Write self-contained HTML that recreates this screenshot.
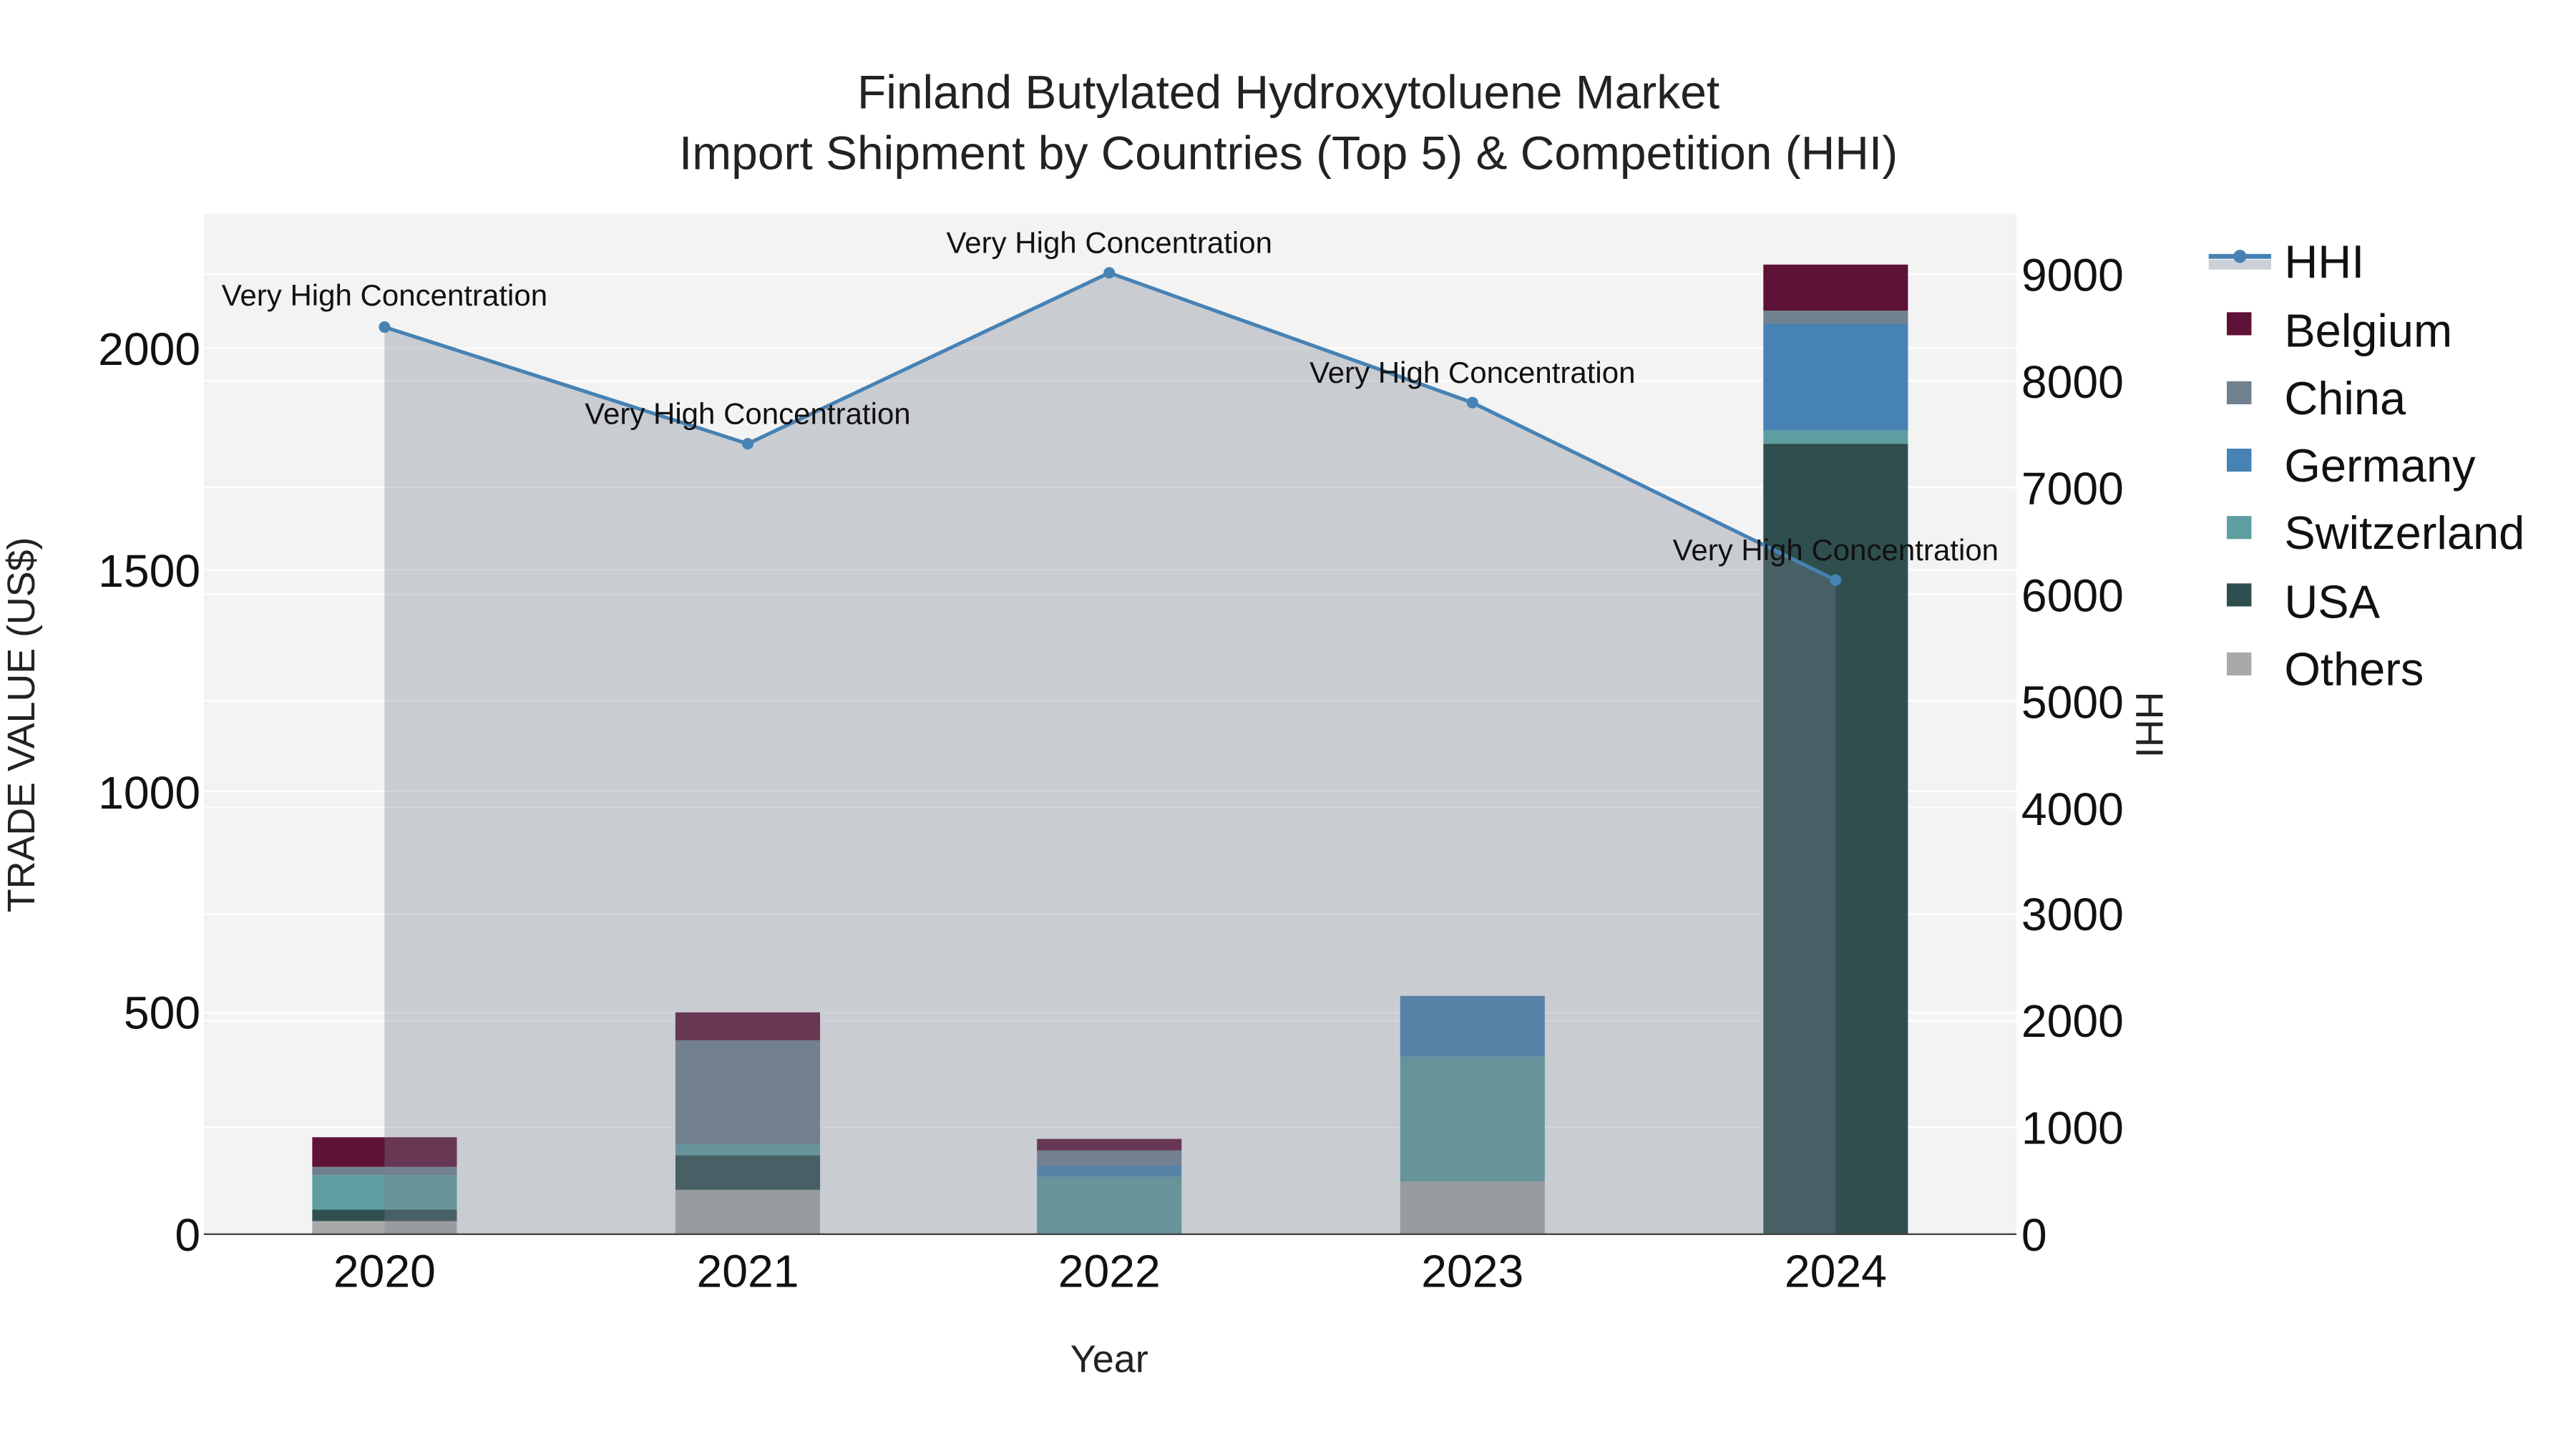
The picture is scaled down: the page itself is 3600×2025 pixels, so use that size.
<!DOCTYPE html>
<html><head><meta charset="utf-8"><style>html,body{margin:0;padding:0;background:#fff}svg{display:block}</style></head>
<body>
<svg width="3600" height="2025" viewBox="0 0 1567.5 881.7" preserveAspectRatio="none" xmlns="http://www.w3.org/2000/svg" font-family="Liberation Sans, sans-serif">
<rect width="1567.5" height="881.7" fill="#fff"/>
<rect x="124" y="130" width="1103" height="621" fill="#f3f3f3"/>
<g stroke="#fff" stroke-width="1">
<line x1="124" x2="1227" y1="616.25" y2="616.25"/>
<line x1="124" x2="1227" y1="481.5" y2="481.5"/>
<line x1="124" x2="1227" y1="346.75" y2="346.75"/>
<line x1="124" x2="1227" y1="212" y2="212"/>
<line x1="124" x2="1227" y1="686.1" y2="686.1"/>
<line x1="124" x2="1227" y1="621.2" y2="621.2"/>
<line x1="124" x2="1227" y1="556.3" y2="556.3"/>
<line x1="124" x2="1227" y1="491.4" y2="491.4"/>
<line x1="124" x2="1227" y1="426.5" y2="426.5"/>
<line x1="124" x2="1227" y1="361.6" y2="361.6"/>
<line x1="124" x2="1227" y1="296.7" y2="296.7"/>
<line x1="124" x2="1227" y1="231.8" y2="231.8"/>
<line x1="124" x2="1227" y1="166.9" y2="166.9"/>
</g>
<g>
<rect x="190" y="743" width="88" height="8" fill="#a9a9a9"/>
<rect x="190" y="736" width="88" height="7" fill="#2f4f4f"/>
<rect x="190" y="715" width="88" height="21" fill="#5f9ea0"/>
<rect x="190" y="710" width="88" height="5" fill="#708090"/>
<rect x="190" y="692" width="88" height="18" fill="#5e1235"/>

<rect x="411" y="724" width="88" height="27" fill="#a9a9a9"/>
<rect x="411" y="703" width="88" height="21" fill="#2f4f4f"/>
<rect x="411" y="696" width="88" height="7" fill="#5f9ea0"/>
<rect x="411" y="633" width="88" height="63" fill="#708090"/>
<rect x="411" y="616" width="88" height="17" fill="#5e1235"/>

<rect x="631" y="716" width="88" height="35" fill="#5f9ea0"/>
<rect x="631" y="709" width="88" height="7" fill="#4682b4"/>
<rect x="631" y="700" width="88" height="9" fill="#708090"/>
<rect x="631" y="693" width="88" height="7" fill="#5e1235"/>

<rect x="852" y="719" width="88" height="32" fill="#a9a9a9"/>
<rect x="852" y="643" width="88" height="76" fill="#5f9ea0"/>
<rect x="852" y="606" width="88" height="37" fill="#4682b4"/>

<rect x="1073" y="270" width="88" height="481" fill="#2f4f4f"/>
<rect x="1073" y="262" width="88" height="8" fill="#5f9ea0"/>
<rect x="1073" y="197" width="88" height="65" fill="#4682b4"/>
<rect x="1073" y="189" width="88" height="8" fill="#708090"/>
<rect x="1073" y="161" width="88" height="28" fill="#5e1235"/>
</g>
<path d="M234,199 L455,270 L675,166 L896,245 L1117,353 L1117,751 L234,751 Z" fill="#78828f" fill-opacity="0.34"/>
<line x1="124" x2="1227" y1="751" y2="751" stroke="#444" stroke-width="1"/>
<polyline points="234,199 455,270 675,166 896,245 1117,353" fill="none" stroke="#4682b4" stroke-width="2.2"/>
<g fill="#4682b4"><circle cx="234" cy="199" r="3.5"/><circle cx="455" cy="270" r="3.5"/><circle cx="675" cy="166" r="3.5"/><circle cx="896" cy="245" r="3.5"/><circle cx="1117" cy="353" r="3.5"/></g>
<g font-size="18.3" fill="#111" text-anchor="middle">
<text x="234" y="186">Very High Concentration</text>
<text x="455" y="258">Very High Concentration</text>
<text x="675" y="154">Very High Concentration</text>
<text x="896" y="233">Very High Concentration</text>
<text x="1117" y="341">Very High Concentration</text>
</g>
<g fill="#222" text-anchor="middle" font-size="28.7">
<text x="784" y="66">Finland Butylated Hydroxytoluene Market</text>
<text x="784" y="103">Import Shipment by Countries (Top 5) &amp; Competition (HHI)</text>
</g>
<g fill="#111" font-size="28" text-anchor="end">
<text x="122" y="761">0</text>
<text x="122" y="626">500</text>
<text x="122" y="492">1000</text>
<text x="122" y="357">1500</text>
<text x="122" y="222">2000</text>
</g>
<g fill="#111" font-size="28" text-anchor="start">
<text x="1230" y="761">0</text>
<text x="1230" y="696">1000</text>
<text x="1230" y="631">2000</text>
<text x="1230" y="566">3000</text>
<text x="1230" y="502">4000</text>
<text x="1230" y="437">5000</text>
<text x="1230" y="372">6000</text>
<text x="1230" y="307">7000</text>
<text x="1230" y="242">8000</text>
<text x="1230" y="177">9000</text>
</g>
<g fill="#111" font-size="28" text-anchor="middle">
<text x="234" y="783">2020</text>
<text x="455" y="783">2021</text>
<text x="675" y="783">2022</text>
<text x="896" y="783">2023</text>
<text x="1117" y="783">2024</text>
</g>
<text x="675" y="835" font-size="23.5" fill="#222" text-anchor="middle">Year</text>
<text transform="translate(21,441) rotate(-90)" font-size="23.4" fill="#222" text-anchor="middle">TRADE VALUE (US$)</text>
<text transform="translate(1300,441) rotate(90)" font-size="23.4" fill="#222" text-anchor="middle">HHI</text>
<rect x="1344" y="158" width="38" height="6" fill="#ccd1d8"/>
<line x1="1344" x2="1382" y1="156" y2="156" stroke="#4682b4" stroke-width="3"/>
<circle cx="1363" cy="156" r="4" fill="#4682b4"/>
<g font-size="28.3" fill="#111">
<text x="1390" y="169">HHI</text>
<text x="1390" y="211">Belgium</text>
<text x="1390" y="252">China</text>
<text x="1390" y="293">Germany</text>
<text x="1390" y="334">Switzerland</text>
<text x="1390" y="376">USA</text>
<text x="1390" y="417">Others</text>
</g>
<rect x="1355" y="190" width="15" height="14" fill="#5e1235"/>
<rect x="1355" y="232" width="15" height="14" fill="#708090"/>
<rect x="1355" y="273" width="15" height="14" fill="#4682b4"/>
<rect x="1355" y="314" width="15" height="14" fill="#5f9ea0"/>
<rect x="1355" y="355" width="15" height="14" fill="#2f4f4f"/>
<rect x="1355" y="397" width="15" height="14" fill="#a9a9a9"/>
</svg>
</body></html>
